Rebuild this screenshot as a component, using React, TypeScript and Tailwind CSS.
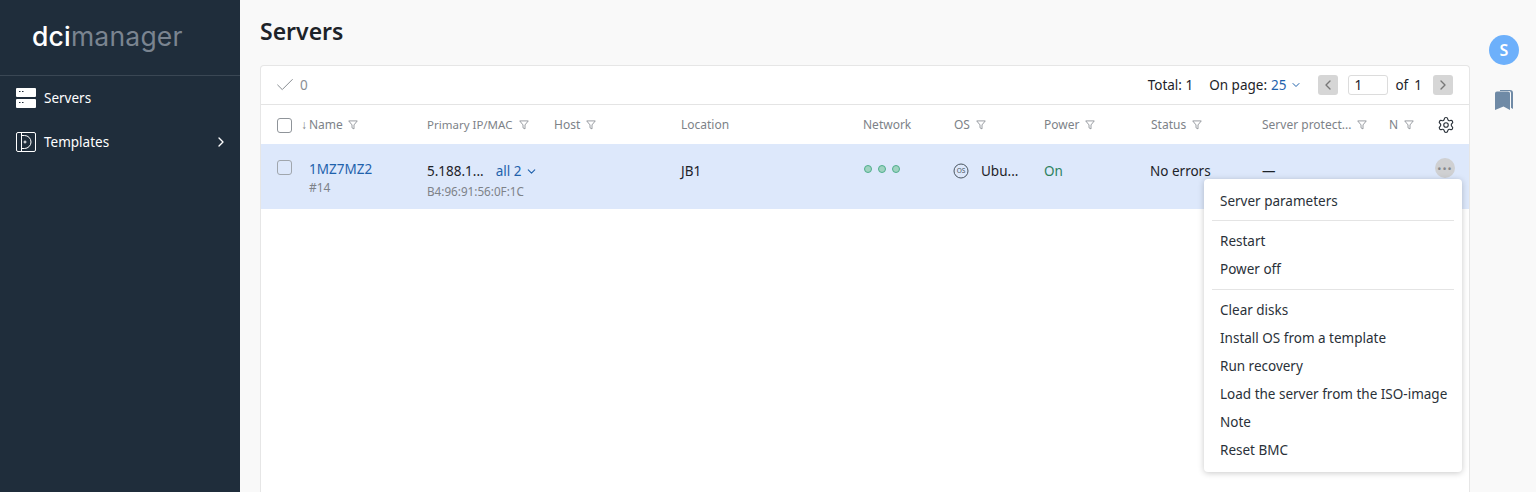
import { ChevronDown, ChevronLeft, ChevronRight, Check, Settings } from "lucide-react";

const Filter = () => (
  <svg width="10" height="10" viewBox="0 0 11 11" fill="none" stroke="#8f9499" strokeWidth="1" className="shrink-0">
    <path d="M0.8 1h9.400L6.600 5.400v4.400L4.400 8.600V5.400z" />
  </svg>
);

const ServersIcon = () => (
  <svg width="20" height="20" viewBox="0 0 20 20" className="shrink-0">
    <rect y="0" width="20" height="9" rx="1" fill="#fff" />
    <rect y="11" width="20" height="9" rx="1" fill="#fff" />
    <path d="M3 3.500h1.500M6 3.500h1.500M3 14.500h1.500M6 14.500h1.500" stroke="#1f2d3b" strokeWidth="1.200" />
  </svg>
);

const TemplatesIcon = () => (
  <svg width="20" height="20" viewBox="0 0 20 20" fill="none" stroke="#fff" strokeWidth="1" className="shrink-0">
    <rect x="0.500" y="0.500" width="19" height="19" rx="1.500" />
    <path d="M5.500 1v18M5.500 3.500h3a6.500 6.500 0 0 1 0 13h-3" />
    <circle cx="9" cy="10" r="1" />
  </svg>
);

const OsIcon = () => (
  <svg width="16" height="16" viewBox="0 0 16 16" className="shrink-0">
    <circle cx="8" cy="8" r="7" fill="none" stroke="#4a5560" strokeWidth="1" />
    <text x="8" y="10.200" textAnchor="middle" fontSize="6.500" fill="#4a5560" fontFamily="Noto Sans, sans-serif">OS</text>
  </svg>
);

const Bookmark = () => (
  <svg width="18" height="21" viewBox="0 0 18 21" className="shrink-0">
    <path d="M5 0h10a3 3 0 0 1 3 3v16l-2-1.200V3a2 2 0 0 0-2-2H5z" fill="#6f8aa6" />
    <path d="M0 3.500a2 2 0 0 1 2-2h11a2 2 0 0 1 2 2V20l-6.500-3.500L0 20z" fill="#6f8aa6" />
  </svg>
);

const HeadCell = ({ w, label, filter = true }: { w: string; label: string; filter?: boolean }) => (
  <div className={`${w} flex items-center gap-[6px] shrink-0`}>
    <span className="text-[12px] text-[#7d8288] whitespace-nowrap">{label}</span>
    {filter && <Filter />}
  </div>
);

const MenuItem = ({ label }: { label: string }) => (
  <div className="h-7 flex items-center px-4 text-[13.5px] text-[#2a3139] whitespace-nowrap">{label}</div>
);

const Dot = () => <span className="w-[8px] h-[8px] rounded-full border-[1.5px] border-[#4fae8c] bg-[#9fd3c0]" />;

export default function App() {
  return (
    <div className="w-[1536px] h-[492px] overflow-hidden flex bg-[#f9f9f9] font-['Noto_Sans',sans-serif] text-[13.5px] text-[#1d2329]">
      <aside className="w-[240px] shrink-0 bg-[#1f2d3b] flex flex-col">
        <div className="h-[76px] shrink-0 border-b border-[#3a4754] pl-[32px] pt-[15px]">
          <span className="text-[26.5px] leading-[42px] tracking-[0.2px] font-['Inter',sans-serif]">
            <span className="text-white font-medium">dci</span>
            <span className="text-[#7a8490]">manager</span>
          </span>
        </div>
        <div className="h-11 flex items-center gap-2 pl-4 text-white">
          <ServersIcon />
          <span>Servers</span>
        </div>
        <div className="h-11 flex items-center gap-2 pl-4 pr-[11px] text-white">
          <TemplatesIcon />
          <span className="flex-1">Templates</span>
          <ChevronRight size={16} strokeWidth={2} />
        </div>
      </aside>

      <main className="w-[1230px] shrink-0 pl-5 flex flex-col">
        <h1 className="h-[65px] shrink-0 pt-[14px] text-[23px] leading-[34px] font-semibold text-[#1d2329]">Servers</h1>
        <section className="flex-1 relative bg-white border border-b-0 border-[#e6e6e6] rounded-t-[4px] w-[1210px]">
          <div className="h-[39px] flex items-center border-b border-[#e4e4e4] pl-[13px] pr-[16px]">
            <Check size={22} strokeWidth={1} className="text-[#7d8288]" />
            <span className="ml-[4px] text-[#8a8f94]">0</span>
            <span className="ml-auto">Total: 1</span>
            <span className="ml-[16px]">On page:</span>
            <span className="ml-[4px] text-[#1f62ac]">25</span>
            <ChevronDown size={12} className="ml-[4px] text-[#1f62ac]" />
            <span className="ml-[16px] size-5 rounded-[3px] bg-[#d6d6d6] flex items-center justify-center text-[#777]">
              <ChevronLeft size={16} />
            </span>
            <span className="ml-[10px] w-10 h-5 rounded-[3px] border border-[#dcdcdc] flex items-center pl-[5px]">1</span>
            <span className="ml-[7px]">of</span>
            <span className="ml-[6px]">1</span>
            <span className="ml-[11px] size-5 rounded-[3px] bg-[#d6d6d6] flex items-center justify-center text-[#777]">
              <ChevronRight size={16} />
            </span>
          </div>

          <div className="h-[40px] flex items-center">
            <span className="ml-[16px] size-[15px] rounded-[3px] border border-[#8f9499] shrink-0" />
            <div className="ml-[9px] w-[126px] shrink-0 flex items-center gap-[5px]">
              <span className="text-[12px] text-[#7d8288] whitespace-nowrap">
                <span className="mr-[2px]">↓</span>Name
              </span>
              <Filter />
            </div>
            <div className="w-[127px] shrink-0 flex items-center gap-[7px]">
              <span className="text-[11.5px] text-[#7d8288] whitespace-nowrap">Primary IP/MAC</span>
              <Filter />
            </div>
            <HeadCell w="w-[127px]" label="Host" />
            <HeadCell w="w-[182px]" label="Location" filter={false} />
            <HeadCell w="w-[91px]" label="Network" filter={false} />
            <HeadCell w="w-[90px]" label="OS" />
            <HeadCell w="w-[107px]" label="Power" />
            <HeadCell w="w-[111px]" label="Status" />
            <HeadCell w="w-[127px]" label="Server protect..." />
            <HeadCell w="w-[48px]" label="N" />
            <Settings size={18} strokeWidth={1.5} className="text-[#2a3139]" />
          </div>

          <div className="h-[65px] flex items-start bg-[#dde8fb] -mt-[1px]">
            <span className="ml-[16px] mt-[16px] size-[15px] rounded-[3px] border border-[#a0a6ad] shrink-0" />
            <div className="ml-[17px] w-[118px] shrink-0 flex flex-col pt-[15px]">
              <span className="text-[#1f62ac] leading-[20px]">1MZ7MZ2</span>
              <span className="text-[12px] leading-[18px] text-[#7d8288]">#14</span>
            </div>
            <div className="w-[127px] shrink-0 flex flex-col pt-[17px]">
              <span className="leading-[20px] flex items-center whitespace-nowrap">
                5.188.1...
                <span className="ml-[12px] text-[#1f62ac]">all 2</span>
                <ChevronDown size={13} className="ml-[4px] text-[#1f62ac]" />
              </span>
              <span className="text-[11.7px] leading-[20px] text-[#7d8288] whitespace-nowrap">B4:96:91:56:0F:1C</span>
            </div>
            <div className="w-[127px] shrink-0" />
            <div className="w-[182px] shrink-0 pt-[17px] leading-[20px]">JB1</div>
            <div className="w-[91px] shrink-0 flex gap-[6px] pl-[1px] pt-[21px]">
              <Dot />
              <Dot />
              <Dot />
            </div>
            <div className="w-[91px] -ml-[1px] shrink-0 flex items-center gap-[12px] pt-[17px] leading-[20px]">
              <OsIcon />
              <span>Ubu...</span>
            </div>
            <div className="w-[107px] shrink-0 text-[#2d8260] pt-[17px] leading-[20px]">On</div>
            <div className="w-[111px] shrink-0 -ml-[1px] pt-[17px] leading-[20px]">No errors</div>
            <div className="w-[173px] shrink-0 ml-[1px] pt-[17px] leading-[20px]">—</div>
            <span className="size-5 mt-[14px] rounded-full bg-[#cfd0d2] flex items-center justify-center text-[#85888c] text-[11px] tracking-[1px] leading-none">
              •••
            </span>
          </div>

          <div className="absolute left-[943px] top-[113px] w-[258px] h-[293px] bg-white rounded-[4px] shadow-[0_1px_6px_rgba(0,0,0,0.22)] pt-2">
            <MenuItem label="Server parameters" />
            <div className="mx-2 mt-[5px] mb-[6px] border-t border-[#e4e4e4]" />
            <MenuItem label="Restart" />
            <MenuItem label="Power off" />
            <div className="mx-2 mt-[6px] mb-[6px] border-t border-[#e4e4e4]" />
            <MenuItem label="Clear disks" />
            <MenuItem label="Install OS from a template" />
            <MenuItem label="Run recovery" />
            <MenuItem label="Load the server from the ISO-image" />
            <MenuItem label="Note" />
            <MenuItem label="Reset BMC" />
          </div>
        </section>
      </main>

      <div className="flex-1 flex flex-col items-center pt-[35px] pl-[2px]">
        <div className="size-[30px] rounded-full bg-[#6db0fb] text-white flex items-center justify-center text-[16px] font-semibold">S</div>
        <div className="mt-[25px]">
          <Bookmark />
        </div>
      </div>
    </div>
  );
}
